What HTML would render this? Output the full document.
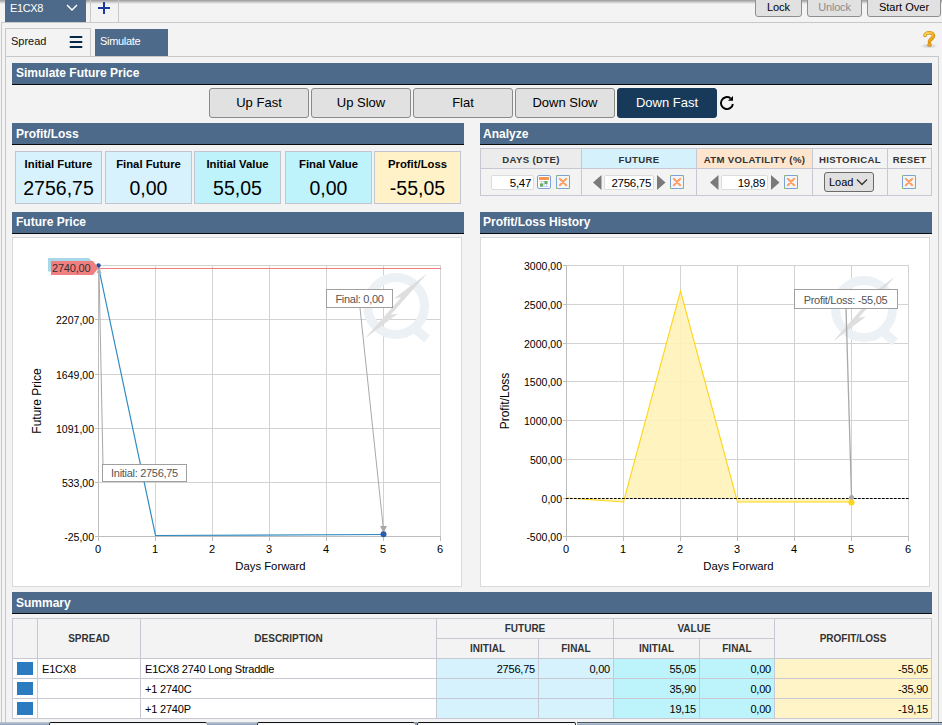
<!DOCTYPE html>
<html><head><meta charset="utf-8">
<style>
*{box-sizing:border-box;margin:0;padding:0}
html,body{width:942px;height:725px;overflow:hidden;background:#f3f3f3;font-family:"Liberation Sans",sans-serif;color:#000;position:relative}
.a{position:absolute}
.hdr{position:absolute;background:#4d6a8a;color:#fff;font-weight:bold;font-size:12px;border-bottom:1px solid #0b0b0b;padding-left:4px;padding-top:1px;line-height:20px;height:22px}
.btn{position:absolute;border:1px solid #8a8a8a;border-radius:3px;background:#e1e1e1;font-size:13px;text-align:center}
.tb{position:absolute;border:1px solid #8f8f8f;border-radius:3px;background:#e1e1e1;font-size:11px;text-align:center;line-height:14px;top:-4px;height:21px;padding-top:3px}
.box{position:absolute;border:1px solid #c2c5cf;text-align:center}
.box .t{font-weight:bold;font-size:11.3px;margin-top:5px;line-height:14px}
.box .v{font-size:19.5px;margin-top:6px;line-height:22px}
.chart{position:absolute;background:#fff;border:1px solid #d9d9d9}
.hl{position:absolute;background:#c8c8d2}
.ah{position:absolute;font-weight:bold;font-size:9.6px;color:#333;text-align:center;line-height:20px;top:149.5px;height:19px;letter-spacing:0.35px}
.inp{position:absolute;background:#fff;border:1px solid #dcdcdc;border-radius:2px;font-size:11.5px;text-align:right;padding-right:2px;line-height:14px;top:175px;height:15px;letter-spacing:-0.3px}
.xi{position:absolute;top:175px;width:14px;height:14px;border:1px solid #7f9fd0;background:#fff}
.sh{position:absolute;font-weight:bold;font-size:10px;color:#333;text-align:center}
.sc{position:absolute;font-size:11px;line-height:20px;height:20px;letter-spacing:-0.2px}
svg text{font-family:"Liberation Sans",sans-serif}
</style></head><body>
<!-- top shadow -->
<div class="a" style="left:0;top:0;width:942px;height:4px;background:linear-gradient(#9a9a9a,#f3f3f3)"></div>
<!-- E1CX8 tab -->
<div class="a" style="left:5px;top:0;width:81px;height:22px;background:#4d6a8a;color:#fff;font-size:11px;line-height:17px;padding-left:5px;letter-spacing:-0.4px">E1CX8</div>
<svg class="a" style="left:65px;top:3px" width="14" height="10"><path d="M2 2 L7 7 L12 2" stroke="#fff" stroke-width="1.5" fill="none"/></svg>
<div class="a" style="left:90px;top:0;width:29px;height:22px;border-left:1px solid #c8c8c8;border-right:1px solid #c8c8c8"></div>
<svg class="a" style="left:96px;top:0px" width="16" height="16"><path d="M8 2 V14 M2 8 H14" stroke="#1a3a9e" stroke-width="2" fill="none"/></svg>
<div class="tb" style="left:755px;width:47px">Lock</div>
<div class="tb" style="left:807px;width:55px;color:#8c8c8c;letter-spacing:-0.2px">Unlock</div>
<div class="tb" style="left:867px;width:74px">Start Over</div>
<div class="a" style="left:1px;top:22px;width:941px;height:1px;background:#c8c8c8"></div>
<div class="a" style="left:1px;top:22px;width:1px;height:703px;background:#c8c8c8"></div>
<!-- inner tabs -->
<div class="a" style="left:5px;top:28px;width:86px;height:29px;border:1px solid #c8c8c8;border-bottom:none;font-size:11px;line-height:24px;padding-left:5px;color:#111">Spread</div>
<svg class="a" style="left:69px;top:30px" width="15" height="20"><path d="M1.5 7 H12.5 M1.5 12 H12.5 M1.5 17 H12.5" stroke="#062848" stroke-width="2" stroke-linecap="round" fill="none"/></svg>
<div class="a" style="left:95px;top:29px;width:73px;height:27px;background:#4d6a8a;color:#fff;font-size:11px;line-height:25px;padding-left:5px;letter-spacing:-0.3px">Simulate</div>
<div class="a" style="left:5px;top:56px;width:934px;height:1px;background:#c8c8c8"></div>
<div class="a" style="left:5px;top:56px;width:1px;height:669px;background:#c8c8c8"></div>
<div class="a" style="left:938px;top:56px;width:1px;height:669px;background:#c8c8c8"></div>
<svg class="a" style="left:916px;top:28px" width="26" height="24"><defs><radialGradient id="qs"><stop offset="0" stop-color="#999" stop-opacity=".7"/><stop offset="1" stop-color="#bbb" stop-opacity="0"/></radialGradient><linearGradient id="qg" x1="0" y1="0" x2="1" y2="1"><stop offset="0" stop-color="#ffd65a"/><stop offset="1" stop-color="#e89a00"/></linearGradient></defs><ellipse cx="13" cy="18" rx="9" ry="2.6" fill="url(#qs)"/><path d="M9 7.5 C9 4 17.5 3.5 17.5 7.8 C17.5 10.5 14 11 13.5 13.5" stroke="#d08a10" stroke-width="3.6" fill="none" stroke-linecap="round"/><path d="M9 7.5 C9 4 17.5 3.5 17.5 7.8 C17.5 10.5 14 11 13.5 13.5" stroke="url(#qg)" stroke-width="2.2" fill="none" stroke-linecap="round"/><circle cx="13.5" cy="16.6" r="1.8" fill="#f0a818" stroke="#d08a10" stroke-width=".8"/></svg>

<div class="hdr" style="left:12px;top:63px;width:920px;padding-top:0">Simulate Future Price</div>
<div class="btn" style="left:209px;top:88px;width:100px;height:30px;line-height:27px">Up Fast</div>
<div class="btn" style="left:311px;top:88px;width:100px;height:30px;line-height:27px">Up Slow</div>
<div class="btn" style="left:413px;top:88px;width:100px;height:30px;line-height:27px">Flat</div>
<div class="btn" style="left:515px;top:88px;width:100px;height:30px;line-height:27px">Down Slow</div>
<div class="btn" style="left:617px;top:88px;width:100px;height:30px;line-height:27px;background:#173a5b;color:#fff;border-color:#173a5b">Down Fast</div>
<svg class="a" style="left:714px;top:90px" width="26" height="24"><path d="M16.5 8.2 A6 6 0 1 0 18.9 14" stroke="#000" stroke-width="1.9" fill="none"/><path d="M14 10.8 L19 10.8 L19 6 Z" fill="#000"/></svg>

<div class="hdr" style="left:12px;top:123px;width:452px;height:22px">Profit/Loss</div>
<div class="box" style="left:15px;top:151px;width:87px;height:53px;background:#d8f2fd"><div class="t">Initial Future</div><div class="v">2756,75</div></div>
<div class="box" style="left:105px;top:151px;width:87px;height:53px;background:#d8f2fd"><div class="t">Final Future</div><div class="v">0,00</div></div>
<div class="box" style="left:194px;top:151px;width:87px;height:53px;background:#bff3fb"><div class="t">Initial Value</div><div class="v">55,05</div></div>
<div class="box" style="left:285px;top:151px;width:87px;height:53px;background:#bff3fb"><div class="t">Final Value</div><div class="v">0,00</div></div>
<div class="box" style="left:374px;top:151px;width:87px;height:53px;background:#fff2c8"><div class="t">Profit/Loss</div><div class="v">-55,05</div></div>

<div class="hdr" style="left:480px;top:123px;width:452px;padding-left:3px">Analyze</div>
<!-- analyze table -->
<div class="a" style="left:481px;top:149px;width:100px;height:19px;background:#ececec"></div>
<div class="a" style="left:582px;top:149px;width:114px;height:19px;background:#d5f1fc"></div>
<div class="a" style="left:697px;top:149px;width:115px;height:19px;background:#fde6cd"></div>
<div class="hl" style="left:480px;top:148px;width:452px;height:1px"></div>
<div class="hl" style="left:480px;top:168px;width:452px;height:1px"></div>
<div class="hl" style="left:480px;top:195px;width:452px;height:1px"></div>
<div class="hl" style="left:480px;top:148px;width:1px;height:48px"></div>
<div class="hl" style="left:581px;top:148px;width:1px;height:48px"></div>
<div class="hl" style="left:696px;top:148px;width:1px;height:48px"></div>
<div class="hl" style="left:812px;top:148px;width:1px;height:48px"></div>
<div class="hl" style="left:887px;top:148px;width:1px;height:48px"></div>
<div class="hl" style="left:931px;top:148px;width:1px;height:48px"></div>
<div class="ah" style="left:481px;width:100px">DAYS (DTE)</div>
<div class="ah" style="left:582px;width:114px">FUTURE</div>
<div class="ah" style="left:697px;width:115px">ATM VOLATILITY (%)</div>
<div class="ah" style="left:813px;width:74px">HISTORICAL</div>
<div class="ah" style="left:888px;width:43px">RESET</div>
<svg width="0" height="0" style="position:absolute"><defs>
<symbol id="xic" viewBox="0 0 14 14"><rect x=".5" y=".5" width="13" height="13" fill="#f3f7fb" stroke="#7aa2d8"/><rect x="0" y="0" width="1.5" height="1.5" fill="#9ed040"/><rect x="12.5" y="0" width="1.5" height="1.5" fill="#9ed040"/><rect x="0" y="12.5" width="1.5" height="1.5" fill="#9ed040"/><rect x="12.5" y="12.5" width="1.5" height="1.5" fill="#9ed040"/><path d="M3.8 3.8 L10.2 10.2 M10.2 3.8 L3.8 10.2" stroke="#ffa064" stroke-width="2.1" stroke-linecap="round"/></symbol>
<symbol id="lar" viewBox="0 0 9 15"><path d="M8.5 0 L0 7.5 L8.5 15Z" fill="#7a7a7a"/></symbol>
<symbol id="rar" viewBox="0 0 9 15"><path d="M0 0 L8.5 7.5 L0 15Z" fill="#7a7a7a"/></symbol>
</defs></svg>
<div class="inp" style="left:491px;width:43px">5,47</div>
<svg class="a" style="left:537px;top:175px" width="14" height="14"><rect x=".5" y=".5" width="13" height="13" rx="1.5" fill="#fff" stroke="#7aa2d8"/><rect x="2" y="2" width="10" height="3" fill="#fa9652"/><path d="M2.5 6.5 H11.5 M2.5 9 H11.5 M2.5 11.5 H11.5 M4.5 6 V12 M7 6 V12 M9.5 6 V12" stroke="#b8cdea" stroke-width=".8"/><rect x="3" y="8.5" width="3" height="3" fill="#6aac5c"/><rect x="7.5" y="6" width="3" height="3" fill="#6aac5c"/></svg>
<svg class="a" style="left:556px;top:175px" width="14" height="14"><use href="#xic"/></svg>
<svg class="a" style="left:593px;top:175px" width="9" height="15"><use href="#lar"/></svg>
<div class="inp" style="left:604px;width:50px">2756,75</div>
<svg class="a" style="left:657px;top:175px" width="9" height="15"><use href="#rar"/></svg>
<svg class="a" style="left:670px;top:175px" width="14" height="14"><use href="#xic"/></svg>
<svg class="a" style="left:710px;top:175px" width="9" height="15"><use href="#lar"/></svg>
<div class="inp" style="left:721px;width:47px">19,89</div>
<svg class="a" style="left:771px;top:175px" width="9" height="15"><use href="#rar"/></svg>
<svg class="a" style="left:784px;top:175px" width="14" height="14"><use href="#xic"/></svg>
<div class="btn" style="left:824px;top:172px;width:50px;height:20px;font-size:11px;line-height:18px;text-align:left;padding-left:4px;border-color:#6a6a6a;background:#e0e0e0">Load</div>
<svg class="a" style="left:855px;top:177px" width="14" height="10"><path d="M2 2.5 L7 7.5 L12 2.5" stroke="#333" stroke-width="1.3" fill="none"/></svg>
<svg class="a" style="left:902px;top:175px" width="14" height="14"><use href="#xic"/></svg>

<div class="hdr" style="left:12px;top:212px;width:452px;padding-top:0">Future Price</div>
<div class="chart" style="left:12px;top:237px;width:450px;height:350px"></div>
<div class="hdr" style="left:480px;top:212px;width:452px;padding-top:0;padding-left:3px">Profit/Loss History</div>
<div class="chart" style="left:480px;top:237px;width:450px;height:350px"></div>

<svg class="a" style="left:0;top:0" width="942" height="725"><line x1="155.5" y1="265" x2="155.5" y2="537" stroke="#d3d3d3"/>
<line x1="212.5" y1="265" x2="212.5" y2="537" stroke="#d3d3d3"/>
<line x1="269.5" y1="265" x2="269.5" y2="537" stroke="#d3d3d3"/>
<line x1="326.5" y1="265" x2="326.5" y2="537" stroke="#d3d3d3"/>
<line x1="383.5" y1="265" x2="383.5" y2="537" stroke="#d3d3d3"/>
<line x1="440.5" y1="265" x2="440.5" y2="537" stroke="#d3d3d3"/>
<line x1="98" y1="265.5" x2="441" y2="265.5" stroke="#d3d3d3"/>
<line x1="98" y1="319.5" x2="441" y2="319.5" stroke="#d3d3d3"/>
<line x1="98" y1="374.5" x2="441" y2="374.5" stroke="#d3d3d3"/>
<line x1="98" y1="428.5" x2="441" y2="428.5" stroke="#d3d3d3"/>
<line x1="98" y1="482.5" x2="441" y2="482.5" stroke="#d3d3d3"/>
<line x1="98.5" y1="265" x2="98.5" y2="537" stroke="#bdbdbd"/>
<line x1="95" y1="536.5" x2="441" y2="536.5" stroke="#bdbdbd"/>
<line x1="95" y1="319.5" x2="98" y2="319.5" stroke="#bdbdbd"/>
<line x1="95" y1="374.5" x2="98" y2="374.5" stroke="#bdbdbd"/>
<line x1="95" y1="428.5" x2="98" y2="428.5" stroke="#bdbdbd"/>
<line x1="95" y1="482.5" x2="98" y2="482.5" stroke="#bdbdbd"/>
<line x1="95" y1="536.5" x2="98" y2="536.5" stroke="#bdbdbd"/>
<line x1="98.5" y1="537" x2="98.5" y2="541" stroke="#bdbdbd"/>
<line x1="155.5" y1="537" x2="155.5" y2="541" stroke="#bdbdbd"/>
<line x1="212.5" y1="537" x2="212.5" y2="541" stroke="#bdbdbd"/>
<line x1="269.5" y1="537" x2="269.5" y2="541" stroke="#bdbdbd"/>
<line x1="326.5" y1="537" x2="326.5" y2="541" stroke="#bdbdbd"/>
<line x1="383.5" y1="537" x2="383.5" y2="541" stroke="#bdbdbd"/>
<line x1="440.5" y1="537" x2="440.5" y2="541" stroke="#bdbdbd"/>
<text x="94" y="323.5" font-size="10.5" text-anchor="end">2207,00</text>
<text x="94" y="378.5" font-size="10.5" text-anchor="end">1649,00</text>
<text x="94" y="432.5" font-size="10.5" text-anchor="end">1091,00</text>
<text x="94" y="486.5" font-size="10.5" text-anchor="end">533,00</text>
<text x="94" y="540.5" font-size="10.5" text-anchor="end">-25,00</text>
<text x="98" y="553" font-size="11" text-anchor="middle">0</text>
<text x="155" y="553" font-size="11" text-anchor="middle">1</text>
<text x="212" y="553" font-size="11" text-anchor="middle">2</text>
<text x="269" y="553" font-size="11" text-anchor="middle">3</text>
<text x="326" y="553" font-size="11" text-anchor="middle">4</text>
<text x="383" y="553" font-size="11" text-anchor="middle">5</text>
<text x="440" y="553" font-size="11" text-anchor="middle">6</text>
<text x="270.5" y="570" font-size="11.3" text-anchor="middle">Days Forward</text>
<text transform="translate(41,401) rotate(-90)" font-size="12" text-anchor="middle">Future Price</text>
<g>
<circle cx="396" cy="306" r="28.5" fill="none" stroke="#ecf1f6" stroke-width="9"/>
<path d="M413 327 L427 339" stroke="#ecf1f6" stroke-width="9"/>
<polygon points="427.1,273.6 394.1,298.6 401.3,297.3 364.9,338.4 397.9,313.4 390.7,314.7" fill="#dedede"/>
</g>
<line x1="98" y1="268.5" x2="441" y2="268.5" stroke="#f08080" stroke-width="1"/>
<polyline points="98.5,267 155.5,535.5 383.5,534.5" fill="none" stroke="#2f8ac0" stroke-width="1.2"/>
<line x1="99" y1="270" x2="103" y2="465" stroke="#a8a8a8" stroke-width="1"/>
<path d="M96.5 273 L99 267 L101.5 273Z" fill="#b0b0b0"/>
<line x1="360" y1="308" x2="383.5" y2="530" stroke="#a8a8a8" stroke-width="1"/>
<path d="M380 526 L383.5 533 L387 526Z" fill="#a8a8a8"/>
<circle cx="98.5" cy="265.5" r="2.2" fill="#1f4fa0"/>
<circle cx="383.5" cy="534.3" r="3" fill="#2a5cb0"/>
<rect x="102.5" y="464.5" width="84" height="17" fill="#fff" stroke="#a0a0a0"/>
<text x="144.5" y="477" font-size="11" fill="#555" text-anchor="middle" letter-spacing="-0.3">Initial: 2756,75</text>
<rect x="326.5" y="289.5" width="66" height="18" fill="#fff" stroke="#a0a0a0"/>
<text x="359.5" y="303" font-size="11" fill="#555" text-anchor="middle" letter-spacing="-0.3">Final: 0,00</text>
<path d="M48 258 H89 L94 263 V271.5 H48Z" fill="#a9d6e8"/>
<path d="M51 261 H93 L98.5 268 L93 275 H51Z" fill="#f07f7f"/>
<text x="52" y="272" font-size="11" fill="#333" letter-spacing="-0.2">2740,00</text><line x1="623.5" y1="265" x2="623.5" y2="537" stroke="#d3d3d3"/>
<line x1="680.5" y1="265" x2="680.5" y2="537" stroke="#d3d3d3"/>
<line x1="737.5" y1="265" x2="737.5" y2="537" stroke="#d3d3d3"/>
<line x1="794.5" y1="265" x2="794.5" y2="537" stroke="#d3d3d3"/>
<line x1="851.5" y1="265" x2="851.5" y2="537" stroke="#d3d3d3"/>
<line x1="908.5" y1="265" x2="908.5" y2="537" stroke="#d3d3d3"/>
<line x1="566" y1="265.5" x2="909" y2="265.5" stroke="#d3d3d3"/>
<line x1="566" y1="304.5" x2="909" y2="304.5" stroke="#d3d3d3"/>
<line x1="566" y1="343.5" x2="909" y2="343.5" stroke="#d3d3d3"/>
<line x1="566" y1="381.5" x2="909" y2="381.5" stroke="#d3d3d3"/>
<line x1="566" y1="420.5" x2="909" y2="420.5" stroke="#d3d3d3"/>
<line x1="566" y1="459.5" x2="909" y2="459.5" stroke="#d3d3d3"/>
<line x1="566" y1="498.5" x2="909" y2="498.5" stroke="#d3d3d3"/>
<line x1="566.5" y1="265" x2="566.5" y2="537" stroke="#bdbdbd"/>
<line x1="563" y1="536.5" x2="909" y2="536.5" stroke="#bdbdbd"/>
<line x1="563" y1="265.5" x2="566" y2="265.5" stroke="#bdbdbd"/>
<line x1="563" y1="304.5" x2="566" y2="304.5" stroke="#bdbdbd"/>
<line x1="563" y1="343.5" x2="566" y2="343.5" stroke="#bdbdbd"/>
<line x1="563" y1="381.5" x2="566" y2="381.5" stroke="#bdbdbd"/>
<line x1="563" y1="420.5" x2="566" y2="420.5" stroke="#bdbdbd"/>
<line x1="563" y1="459.5" x2="566" y2="459.5" stroke="#bdbdbd"/>
<line x1="563" y1="498.5" x2="566" y2="498.5" stroke="#bdbdbd"/>
<line x1="563" y1="536.5" x2="566" y2="536.5" stroke="#bdbdbd"/>
<line x1="566.5" y1="537" x2="566.5" y2="541" stroke="#bdbdbd"/>
<line x1="623.5" y1="537" x2="623.5" y2="541" stroke="#bdbdbd"/>
<line x1="680.5" y1="537" x2="680.5" y2="541" stroke="#bdbdbd"/>
<line x1="737.5" y1="537" x2="737.5" y2="541" stroke="#bdbdbd"/>
<line x1="794.5" y1="537" x2="794.5" y2="541" stroke="#bdbdbd"/>
<line x1="851.5" y1="537" x2="851.5" y2="541" stroke="#bdbdbd"/>
<line x1="908.5" y1="537" x2="908.5" y2="541" stroke="#bdbdbd"/>
<text x="562" y="269.5" font-size="10.5" text-anchor="end">3000,00</text>
<text x="562" y="308.5" font-size="10.5" text-anchor="end">2500,00</text>
<text x="562" y="347.5" font-size="10.5" text-anchor="end">2000,00</text>
<text x="562" y="385.5" font-size="10.5" text-anchor="end">1500,00</text>
<text x="562" y="424.5" font-size="10.5" text-anchor="end">1000,00</text>
<text x="562" y="463.5" font-size="10.5" text-anchor="end">500,00</text>
<text x="562" y="502.5" font-size="10.5" text-anchor="end">0,00</text>
<text x="562" y="540.5" font-size="10.5" text-anchor="end">-500,00</text>
<text x="566" y="553" font-size="11" text-anchor="middle">0</text>
<text x="623" y="553" font-size="11" text-anchor="middle">1</text>
<text x="680" y="553" font-size="11" text-anchor="middle">2</text>
<text x="737" y="553" font-size="11" text-anchor="middle">3</text>
<text x="794" y="553" font-size="11" text-anchor="middle">4</text>
<text x="851" y="553" font-size="11" text-anchor="middle">5</text>
<text x="908" y="553" font-size="11" text-anchor="middle">6</text>
<text x="738.5" y="570" font-size="11.3" text-anchor="middle">Days Forward</text>
<text transform="translate(509,401) rotate(-90)" font-size="12" text-anchor="middle">Profit/Loss</text>
<g>
<circle cx="864" cy="309" r="28.5" fill="none" stroke="#ecf1f6" stroke-width="9"/>
<path d="M881 330 L895 342" stroke="#ecf1f6" stroke-width="9"/>
<polygon points="895.0,276.6 862.1,301.6 869.3,300.3 833.0,341.4 865.9,316.4 858.7,317.7" fill="#dedede"/>
</g>
<path d="M566.5 498 L623.5 502 L680.5 291 L737.5 502 L851.5 502 L851.5 498Z" fill="#fff2b8" opacity="0.9"/>
<polyline points="566.5,498 623.5,502 680.5,291 737.5,502 851.5,502" fill="none" stroke="#ffd414" stroke-width="1.1"/>
<line x1="566" y1="498.5" x2="909" y2="498.5" stroke="#000" stroke-width="1" stroke-dasharray="2.6,1.4"/>
<line x1="846" y1="308" x2="851.5" y2="496" stroke="#a8a8a8" stroke-width="1.3"/>
<circle cx="851.5" cy="497.5" r="2.5" fill="#a8a8a8"/>
<circle cx="851.5" cy="502.5" r="3" fill="#ffd414"/>
<rect x="794.5" y="289.5" width="103" height="19" fill="#fff" stroke="#a0a0a0"/>
<text x="845.5" y="304" font-size="11" fill="#555" text-anchor="middle" letter-spacing="-0.3">Profit/Loss: -55,05</text></svg>
<div class="hdr" style="left:12px;top:592px;width:920px">Summary</div>

<!-- summary table -->
<div class="a" style="left:12px;top:618px;width:920px;height:40px;background:#f3f3f3"></div>
<div class="a" style="left:13px;top:659px;width:424px;height:59px;background:#fff"></div>
<div class="a" style="left:437px;top:659px;width:176px;height:59px;background:#d6f2fd"></div>
<div class="a" style="left:614px;top:659px;width:160px;height:59px;background:#bdf4fb"></div>
<div class="a" style="left:775px;top:659px;width:156px;height:59px;background:#fff3c8"></div>
<div class="hl" style="left:12px;top:618px;width:920px;height:1px"></div>
<div class="hl" style="left:436px;top:638px;width:338px;height:1px"></div>
<div class="hl" style="left:12px;top:658px;width:920px;height:1px"></div>
<div class="hl" style="left:12px;top:678px;width:920px;height:1px"></div>
<div class="hl" style="left:12px;top:698px;width:920px;height:1px"></div>
<div class="hl" style="left:12px;top:718px;width:920px;height:1px"></div>
<div class="hl" style="left:12px;top:618px;width:1px;height:101px"></div>
<div class="hl" style="left:37px;top:618px;width:1px;height:101px"></div>
<div class="hl" style="left:140px;top:618px;width:1px;height:101px"></div>
<div class="hl" style="left:436px;top:618px;width:1px;height:101px"></div>
<div class="hl" style="left:538px;top:638px;width:1px;height:81px"></div>
<div class="hl" style="left:613px;top:618px;width:1px;height:101px"></div>
<div class="hl" style="left:699px;top:638px;width:1px;height:81px"></div>
<div class="hl" style="left:774px;top:618px;width:1px;height:101px"></div>
<div class="hl" style="left:931px;top:618px;width:1px;height:101px"></div>
<div class="sh" style="left:38px;top:633px;width:102px">SPREAD</div>
<div class="sh" style="left:141px;top:633px;width:295px">DESCRIPTION</div>
<div class="sh" style="left:437px;top:623px;width:176px">FUTURE</div>
<div class="sh" style="left:437px;top:643px;width:101px">INITIAL</div>
<div class="sh" style="left:539px;top:643px;width:74px">FINAL</div>
<div class="sh" style="left:614px;top:623px;width:160px">VALUE</div>
<div class="sh" style="left:614px;top:643px;width:85px">INITIAL</div>
<div class="sh" style="left:700px;top:643px;width:74px">FINAL</div>
<div class="sh" style="left:775px;top:633px;width:156px">PROFIT/LOSS</div>
<div class="a" style="left:17px;top:662px;width:16px;height:13px;background:#2a7bbf"></div>
<div class="a" style="left:17px;top:682px;width:16px;height:13px;background:#2a7bbf"></div>
<div class="a" style="left:17px;top:702px;width:16px;height:13px;background:#2a7bbf"></div>
<div class="sc" style="left:42px;top:659px">E1CX8</div>
<div class="sc" style="left:145px;top:659px">E1CX8 2740 Long Straddle</div>
<div class="sc" style="left:145px;top:679px">+1 2740C</div>
<div class="sc" style="left:145px;top:699px">+1 2740P</div>
<div class="sc" style="left:437px;top:659px;width:98px;text-align:right">2756,75</div>
<div class="sc" style="left:539px;top:659px;width:71px;text-align:right">0,00</div>
<div class="sc" style="left:614px;top:659px;width:82px;text-align:right">55,05</div>
<div class="sc" style="left:614px;top:679px;width:82px;text-align:right">35,90</div>
<div class="sc" style="left:614px;top:699px;width:82px;text-align:right">19,15</div>
<div class="sc" style="left:700px;top:659px;width:71px;text-align:right">0,00</div>
<div class="sc" style="left:700px;top:679px;width:71px;text-align:right">0,00</div>
<div class="sc" style="left:700px;top:699px;width:71px;text-align:right">0,00</div>
<div class="sc" style="left:775px;top:659px;width:153px;text-align:right">-55,05</div>
<div class="sc" style="left:775px;top:679px;width:153px;text-align:right">-35,90</div>
<div class="sc" style="left:775px;top:699px;width:153px;text-align:right">-19,15</div>
<!-- bottom strip -->
<div class="a" style="left:0;top:722px;width:942px;height:3px;background:#f3f3f3"></div>
<div class="a" style="left:0;top:722px;width:49px;height:3px;background:linear-gradient(#c0cad6,#8ea0b8)"></div>
<div class="a" style="left:49px;top:722px;width:158px;height:3px;border-top:1px solid #111;border-left:1px solid #333;border-radius:2px 2px 0 0;background:#f6f8fa"></div>
<div class="a" style="left:207px;top:722px;width:50px;height:3px;background:linear-gradient(#c0cad6,#8ea0b8)"></div>
<div class="a" style="left:257px;top:722px;width:158px;height:3px;border-top:1px solid #111;border-left:1px solid #333;border-radius:2px 2px 0 0;background:#f6f8fa"></div>
<div class="a" style="left:415px;top:722px;width:2px;height:3px;background:#8ea0b8"></div>
<div class="a" style="left:417px;top:722px;width:159px;height:3px;border-top:1px solid #111;border-left:1px solid #333;border-right:1px solid #333;border-radius:2px 2px 0 0;background:#f6f8fa"></div>
<div class="a" style="left:577px;top:722px;width:365px;height:3px;border-top:1px solid #4a5566;background:linear-gradient(#c0cad6,#8ea0b8)"></div>
</body></html>
